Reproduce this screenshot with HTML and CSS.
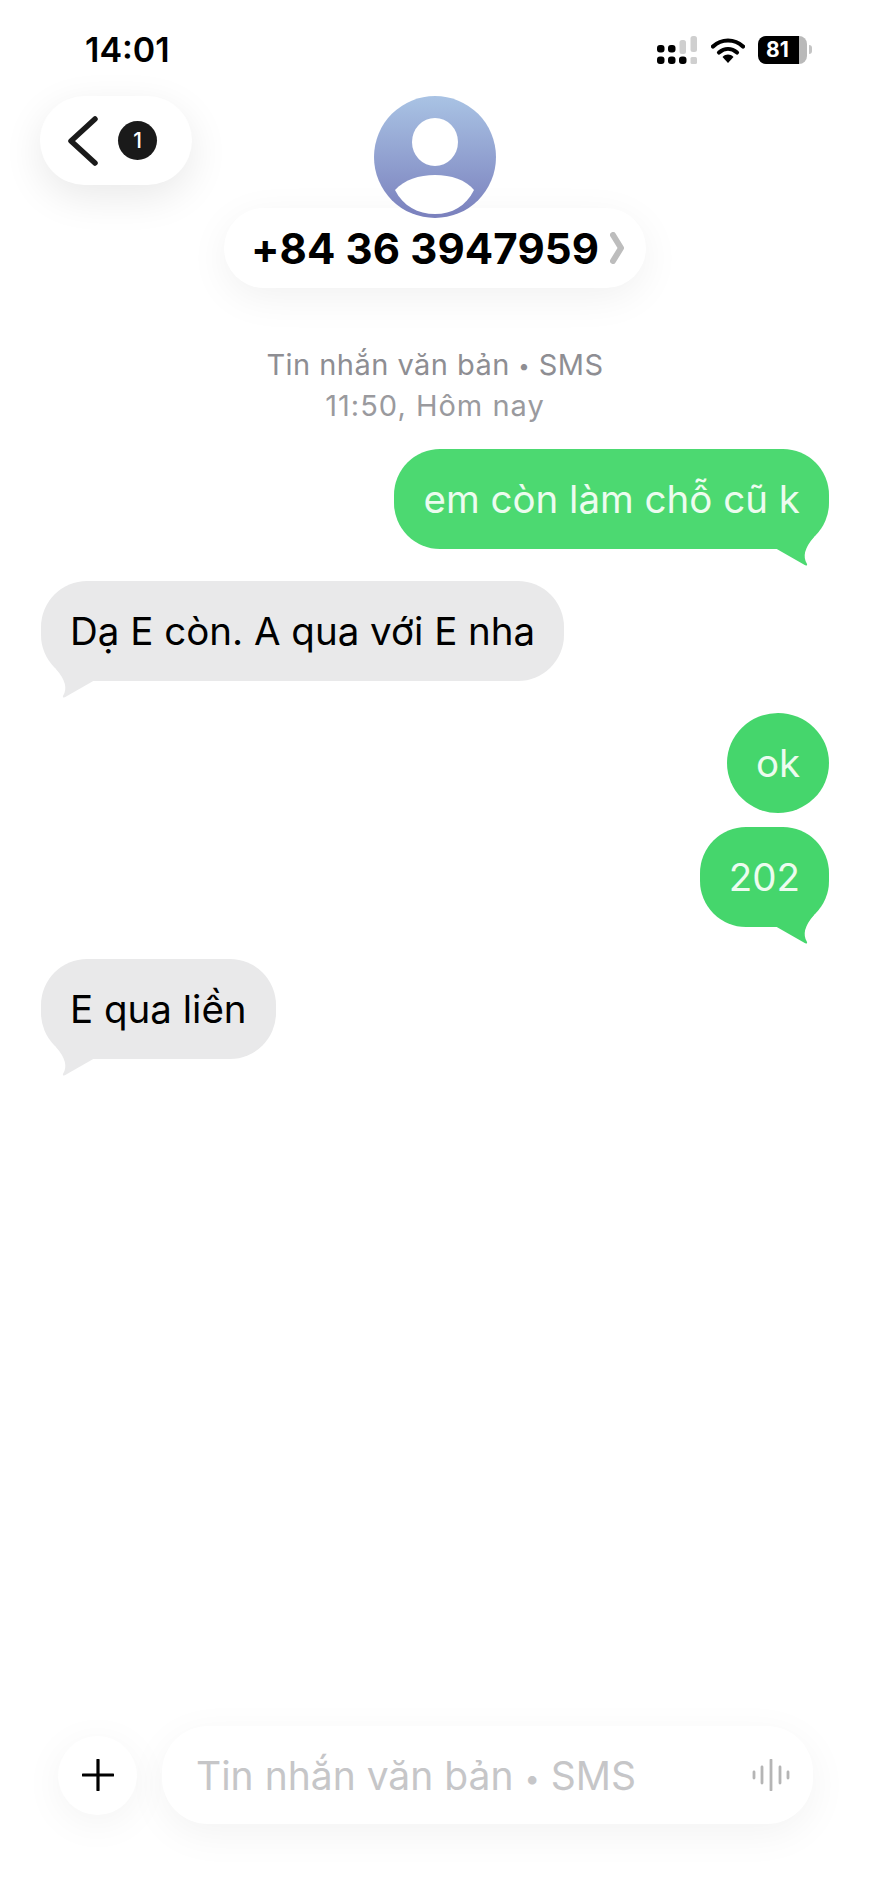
FILE: index.html
```html
<!DOCTYPE html>
<html lang="vi">
<head>
    <meta charset="UTF-8">
    <meta name="viewport" content="width=device-width, initial-scale=1.0">
    <title>Tin nhắn</title>
    <link rel="stylesheet" href="styles.css">
</head>
<body>
    <div class="screen">
        <!-- Status bar -->
        <div class="status-bar">
            <span class="time">14:01</span>
            <div class="status-icons">
                <svg class="signal" width="42" height="28" viewBox="0 0 42 28">
                    <rect x="0" y="9" width="7.500" height="7.500" rx="3" fill="#000"/>
                    <rect x="0" y="20.500" width="7.500" height="7.500" rx="3" fill="#000"/>
                    <rect x="11" y="9" width="7.500" height="7.500" rx="3" fill="#000"/>
                    <rect x="11" y="20.500" width="7.500" height="7.500" rx="3" fill="#000"/>
                    <rect x="22" y="20.500" width="7.500" height="7.500" rx="3" fill="#000"/>
                    <rect x="22.500" y="4" width="6.500" height="14" rx="2.500" fill="#cfcfcf"/>
                    <rect x="33.500" y="0" width="6.500" height="16" rx="2.500" fill="#cfcfcf"/>
                    <rect x="33.500" y="21" width="6.500" height="7" rx="1.500" fill="#cfcfcf"/>
                </svg>
                <svg class="wifi" width="34" height="26" viewBox="0 0 34 26">
                    <path d="M2 9.500C10.500 1.500 23.500 1.500 32 9.500" fill="none" stroke="#000" stroke-width="4.200" stroke-linecap="round"/>
                    <path d="M8 15.500C13.500 10.800 20.500 10.800 26 15.500" fill="none" stroke="#000" stroke-width="4.200" stroke-linecap="round"/>
                    <path d="M11.500 20C15 16.800 19 16.800 22.500 20L17 26Z" fill="#000"/>
                </svg>
                <div class="battery"><span>81</span></div>
                <span class="battery-nib"></span>
            </div>
        </div>

        <!-- Header -->
        <div class="header">
            <div class="back-pill">
                <svg width="30" height="50" viewBox="0 0 30 50">
                    <path d="M27 3L3 25L27 47" fill="none" stroke="#1a1a1a" stroke-width="5.500" stroke-linecap="round" stroke-linejoin="round"/>
                </svg>
                <span class="badge">1</span>
            </div>
            <div class="contact">
                <svg class="avatar" width="122" height="122" viewBox="0 0 122 122">
                    <defs>
                        <linearGradient id="avatarFill" x1="0" y1="0" x2="0" y2="1">
                            <stop offset="0" stop-color="#a9c3e4"/>
                            <stop offset="1" stop-color="#7a80bd"/>
                        </linearGradient>
                    </defs>
                    <circle cx="61" cy="61" r="61" fill="url(#avatarFill)"/>
                    <ellipse cx="61" cy="46" rx="23" ry="24" fill="#fff"/>
                    <path d="M21 94C30 84 45 79 61 79C77 79 92 84 100 94C92 110 78 118 61 118C44 118 29 110 21 94Z" fill="#fff"/>
                </svg>
                <div class="name-pill">
                    <span class="phone">+84 36 3947959</span>
                    <svg width="14" height="32" viewBox="0 0 14 32">
                        <path d="M3 3L11 16L3 29" fill="none" stroke="#bdbdbd" stroke-width="6" stroke-linecap="round" stroke-linejoin="round"/>
                    </svg>
                </div>
            </div>
        </div>

        <!-- Tin nhan -->
        <div class="meta">
            <p class="meta-title">Tin nhắn văn bản <span class="dot">•</span> SMS</p>
            <p class="meta-date">11:50, Hôm nay</p>
        </div>

        <div class="messages">
            <div class="bubble outgoing">em còn làm chỗ cũ k
                <svg class="tail" width="50" height="40" viewBox="0 0 50 40"><path d="M5 17L33 33Q38 36 37 33Q30 22 44 6L5 6Z"/></svg>
            </div>
            <div class="bubble incoming">Dạ E còn. A qua với E nha
                <svg class="tail" width="50" height="40" viewBox="0 0 50 40"><path d="M5 17L33 33Q38 36 37 33Q30 22 44 6L5 6Z"/></svg>
            </div>
            <div class="bubble outgoing ok">ok</div>
            <div class="bubble outgoing same-group">202
                <svg class="tail" width="50" height="40" viewBox="0 0 50 40"><path d="M5 17L33 33Q38 36 37 33Q30 22 44 6L5 6Z"/></svg>
            </div>
            <div class="bubble incoming">E qua liền
                <svg class="tail" width="50" height="40" viewBox="0 0 50 40"><path d="M5 17L33 33Q38 36 37 33Q30 22 44 6L5 6Z"/></svg>
            </div>
        </div>

        <!-- Composer -->
        <div class="composer">
            <div class="plus-button">
                <svg width="32" height="32" viewBox="0 0 32 32">
                    <path d="M1 16H31M16 1V31" stroke="#000" stroke-width="3.200" stroke-linecap="round"/>
                </svg>
            </div>
            <div class="input-pill">
                <span class="placeholder">Tin nhắn văn bản <span class="dot">•</span> SMS</span>
                <svg width="38" height="32" viewBox="0 0 38 32">
                    <path d="M2 13V19M10 8V24M19 1V31M28 8V24M36 13V19" stroke="#b5b5b5" stroke-width="2.800" stroke-linecap="round"/>
                </svg>
            </div>
        </div>
    </div>
</body>
</html>
```

FILE: styles.css
```css
* {
    box-sizing: border-box;
}
body {
    margin: 0;
    background: #fff;
    font-family: Inter, "Liberation Sans", sans-serif;
    color: #000;
}
.screen {
    display: flex;
    flex-direction: column;
    min-height: 100vh;
    overflow: hidden;
}
.status-bar {
    display: flex;
    justify-content: space-between;
    align-items: center;
    height: 96px;
    padding: 3px 58px 0 85px;
}
.time {
    font-size: 34px;
    font-weight: 600;
}
.status-icons {
    display: flex;
    align-items: center;
}
.signal {
    margin-right: 12px;
}
.wifi {
    margin-right: 13px;
}
.battery {
    display: flex;
    align-items: center;
    width: 49px;
    height: 28px;
    padding-left: 8px;
    border-radius: 8px;
    background: linear-gradient(to right, #000 41px, #b9b9b9 41px);
    color: #fff;
    font-size: 21px;
    font-weight: 700;
}
.battery-nib {
    width: 3px;
    height: 9px;
    margin-left: 2px;
    border-radius: 0 3px 3px 0;
    background: #c4c4c4;
}
.header {
    display: grid;
    grid-template-columns: 1fr auto 1fr;
    padding: 0 40px;
}
.back-pill {
    display: flex;
    align-items: center;
    gap: 20px;
    width: 152px;
    height: 89px;
    padding-left: 28px;
    border-radius: 45px;
    background: #fff;
    box-shadow: 0 12px 40px rgba(0, 0, 0, 0.09);
}
.badge {
    display: flex;
    justify-content: center;
    align-items: center;
    width: 39px;
    height: 39px;
    border-radius: 50%;
    background: #1a1a1a;
    color: #fff;
    font-size: 21px;
    font-weight: 500;
}
.contact {
    display: flex;
    flex-direction: column;
    align-items: center;
}
.avatar {
    position: relative;
    z-index: 1;
    margin-bottom: -10px;
}
.name-pill {
    display: flex;
    align-items: center;
    gap: 11px;
    width: 422px;
    height: 80px;
    padding-left: 27px;
    border-radius: 40px;
    background: #fff;
    box-shadow: 0 10px 40px rgba(0, 0, 0, 0.06);
}
.phone {
    font-size: 42px;
    font-weight: 700;
    letter-spacing: 0.1px;
    white-space: nowrap;
}
.meta {
    margin-top: 56px;
    text-align: center;
    color: #8e8e93;
    font-size: 29px;
    line-height: 41px;
}
.meta p {
    margin: 0;
}
.meta-title {
    letter-spacing: 0.45px;
}
.meta-date {
    color: #9a9a9e;
    letter-spacing: 1px;
}
.dot {
    font-size: 0.7em;
    line-height: 0;
    vertical-align: 0.08em;
}
.messages {
    display: flex;
    flex-direction: column;
    gap: 32px;
    margin-top: 23px;
    padding: 0 41px;
}
.bubble {
    position: relative;
    display: flex;
    align-items: center;
    height: 100px;
    padding: 0 29px;
    border-radius: 46px;
    font-size: 38.500px;
    white-space: nowrap;
}
.outgoing {
    align-self: flex-end;
    background: #4cd971;
    color: #ecfcef;
}
.incoming {
    align-self: flex-start;
    background: #e9e9ea;
    color: #000;
}
.ok {
    padding: 0;
    border-radius: 50%;
    width: 102px;
    justify-content: center;
    background: #45d66c;
}
.same-group {
    margin-top: -18px;
    background: #45d66c;
}
.tail {
    position: absolute;
    top: 82px;
    right: 9px;
    fill: #4cd971;
}
.same-group .tail {
    fill: #45d66c;
}
.incoming .tail {
    right: auto;
    left: 9px;
    fill: #e9e9ea;
    transform: scaleX(-1);
}
.composer {
    display: flex;
    align-items: center;
    gap: 25px;
    margin-top: auto;
    padding: 0 57px 59px 58px;
}
.plus-button {
    display: flex;
    justify-content: center;
    align-items: center;
    flex: none;
    width: 79px;
    height: 79px;
    border-radius: 50%;
    background: #fff;
    box-shadow: 0 8px 40px rgba(0, 0, 0, 0.05);
}
.input-pill {
    display: flex;
    justify-content: space-between;
    align-items: center;
    flex: 1;
    height: 98px;
    padding: 0 23px 0 34px;
    border-radius: 46px;
    background: #fff;
    box-shadow: 0 10px 40px rgba(0, 0, 0, 0.05);
}
.placeholder {
    color: #c6c6c8;
    font-size: 39px;
    white-space: nowrap;
}
```
